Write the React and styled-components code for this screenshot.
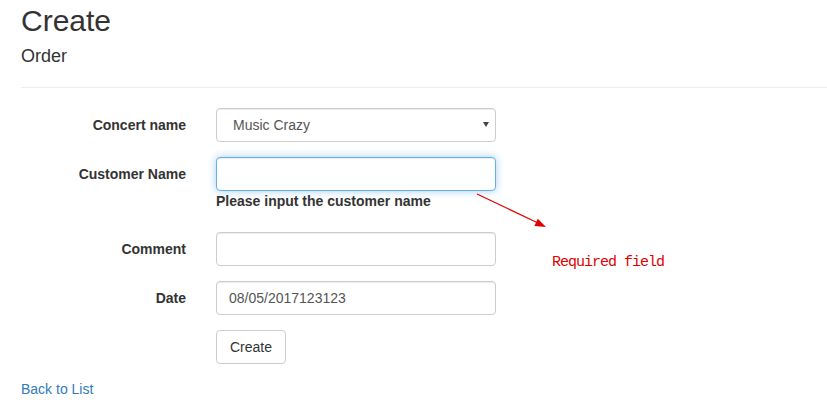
import React from "react";
import styled, { createGlobalStyle, css } from "styled-components";

const GlobalStyle = createGlobalStyle`
  * { box-sizing: border-box; }
  html, body { margin: 0; padding: 0; background: #fff; }
  body {
    font-family: "Liberation Sans", Arial, Helvetica, sans-serif;
    font-size: 14px;
    line-height: 1.42857143;
    color: #333;
  }
`;

const Page = styled.div`
  position: relative;
  display: flow-root;
  padding: 0 0 0 21px;
  width: 827px;
  height: 405px;
  overflow: hidden;
`;

const Title = styled.h2`
  margin: 4px 0 0;
  font-size: 30px;
  font-weight: 500;
  line-height: 1.1;
  color: #333;
`;

const Subtitle = styled.h4`
  margin: 10px 0 10px;
  font-size: 18px;
  font-weight: 500;
  line-height: 1.1;
  color: #333;
`;

const Divider = styled.hr`
  margin: 20px 0;
  border: 0;
  border-top: 1px solid #eee;
  height: 0;
`;

const Form = styled.form`
  margin: 0;
`;

const FormGroup = styled.div`
  display: grid;
  grid-template-columns: 165px 280px;
  column-gap: 30px;
  margin-bottom: 15px;
`;

const Label = styled.label`
  display: block;
  text-align: right;
  padding-top: 7px;
  font-weight: 700;
  line-height: 20px;
  color: #333;
`;

const Control = styled.div`
  position: relative;
  display: flex;
  flex-direction: column;
`;

const controlBase = css`
  display: block;
  width: 100%;
  height: 34px;
  padding: 6px 12px;
  font-family: "Liberation Sans", Arial, Helvetica, sans-serif;
  font-size: 14px;
  line-height: 1.42857143;
  color: #555;
  background: #fff;
  border: 1px solid #ccc;
  border-radius: 4px;
  box-shadow: inset 0 1px 1px rgba(0, 0, 0, 0.075);
  outline: none;
`;

const Input = styled.input`
  ${controlBase}
  ${(p) =>
    p.$focused &&
    css`
      border-color: #66afe9;
      box-shadow: inset 0 1px 1px rgba(0, 0, 0, 0.075),
        0 0 8px rgba(102, 175, 233, 0.6);
    `}
`;

const Select = styled.select`
  ${controlBase}
  appearance: none;
  -webkit-appearance: none;
  padding-left: 16px;
`;

const Caret = styled.span`
  position: absolute;
  right: 7px;
  top: 14px;
  width: 0;
  height: 0;
  border-left: 3px solid transparent;
  border-right: 3px solid transparent;
  border-top: 5px solid #444;
  pointer-events: none;
`;

const HelpText = styled.span`
  display: block;
  margin: 0 0 6px;
  line-height: 20px;
  font-weight: 700;
  color: #333;
`;

const Button = styled.button`
  width: 70px;
  height: 34px;
  padding: 6px 12px;
  font-family: "Liberation Sans", Arial, Helvetica, sans-serif;
  font-size: 14px;
  line-height: 1.42857143;
  color: #333;
  background: #fff;
  border: 1px solid #ccc;
  border-radius: 4px;
  cursor: pointer;
`;

const BackLink = styled.a`
  display: block;
  margin: 0;
  line-height: 20px;
  color: #337ab7;
  text-decoration: none;
`;

const Annotation = styled.svg`
  position: absolute;
  left: 0;
  top: 0;
  pointer-events: none;
`;

const Note = styled.span`
  position: absolute;
  left: 552px;
  top: 254px;
  font-family: "Liberation Mono", "Courier New", monospace;
  font-size: 15px;
  letter-spacing: -1px;
  line-height: 18px;
  color: #e00000;
  white-space: nowrap;
`;

export default function App() {
  return (
    <>
      <GlobalStyle />
      <Page>
        <Title>Create</Title>
        <Subtitle>Order</Subtitle>
        <Divider />
        <Form onSubmit={(e) => e.preventDefault()}>
          <FormGroup>
            <Label>Concert name</Label>
            <Control>
              <Select defaultValue="1">
                <option value="1">Music Crazy</option>
              </Select>
              <Caret />
            </Control>
          </FormGroup>
          <FormGroup>
            <Label>Customer Name</Label>
            <Control>
              <Input $focused type="text" defaultValue="" />
              <HelpText>Please input the customer name</HelpText>
            </Control>
          </FormGroup>
          <FormGroup>
            <Label>Comment</Label>
            <Control>
              <Input type="text" defaultValue="" />
            </Control>
          </FormGroup>
          <FormGroup>
            <Label>Date</Label>
            <Control>
              <Input type="text" defaultValue="08/05/2017123123" />
            </Control>
          </FormGroup>
          <FormGroup>
            <span />
            <Control>
              <Button type="submit">Create</Button>
            </Control>
          </FormGroup>
        </Form>
        <BackLink href="#">Back to List</BackLink>
        <Annotation width="827" height="405" viewBox="0 0 827 405">
          <line x1="477" y1="194" x2="538" y2="223" stroke="#e00000" strokeWidth="1.2" />
          <polygon points="546,227 534.4,225.9 537.8,218.7" fill="#e00000" />
        </Annotation>
        <Note>Required field</Note>
      </Page>
    </>
  );
}
